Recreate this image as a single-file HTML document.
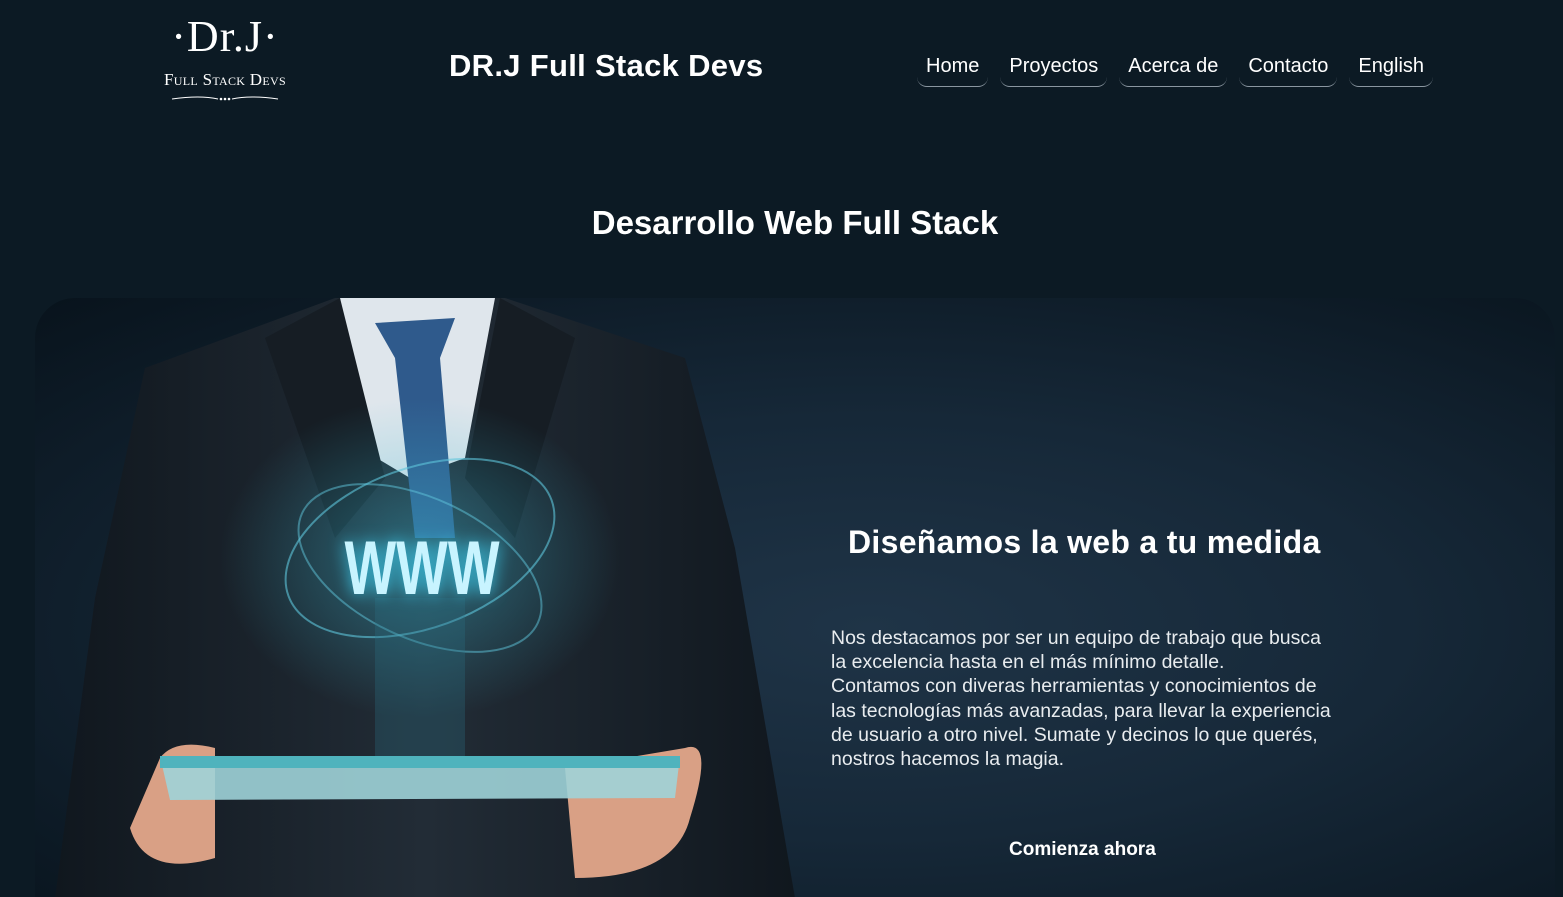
<!DOCTYPE html>
<html><head><meta charset="utf-8"><style>
*{margin:0;padding:0;box-sizing:border-box}
html,body{width:1563px;height:897px;overflow:hidden}
body{background:#0c1a24;font-family:"Liberation Sans","DejaVu Sans",sans-serif;color:#fff;position:relative}
.logo{position:absolute;left:150px;top:12px;width:150px;text-align:center;font-family:"Liberation Serif",serif}
.logo .a{font-size:44px;line-height:50px;letter-spacing:1px}
.logo .b{font-size:17px;margin-top:8px;letter-spacing:.3px;font-variant:small-caps}
.title{position:absolute;left:449px;top:48px;font-size:31px;font-weight:bold;letter-spacing:.3px}
nav{position:absolute;top:52px;left:917px;display:flex;gap:12px}
nav a{color:#fff;text-decoration:none;font-size:20px;padding:0 9px 8px;border-bottom:1px solid #8a96a0;border-radius:0 0 10px 10px;height:35px;line-height:28px}
h1{position:absolute;top:204px;left:0;width:1590px;text-align:center;font-size:33px;font-weight:bold}
.panel{position:absolute;left:35px;top:298px;width:1520px;height:599px;border-radius:40px 40px 0 0;background:radial-gradient(ellipse at 55% 55%,#1f3447 0%,#162838 45%,#08131c 100%);overflow:hidden}
h2{position:absolute;left:848px;top:524px;font-size:32px;font-weight:bold;letter-spacing:.3px}
p{position:absolute;left:831px;top:626px;font-size:19.5px;line-height:24.2px;color:#e8ecef;white-space:nowrap}
.btn{position:absolute;left:1009px;top:839px;font-size:19px;font-weight:bold}
</style></head><body>
<div class="logo"><div class="a">·Dr.J·</div><div class="b">Full Stack Devs</div>
<svg width="110" height="8" style="margin-top:0"><path d="M2 4 Q30 0 48 4 M62 4 Q80 0 108 4" stroke="#fff" fill="none"/><circle cx="51" cy="4" r="1.3" fill="#fff"/><circle cx="55" cy="4" r="1.3" fill="#fff"/><circle cx="59" cy="4" r="1.3" fill="#fff"/></svg></div>
<div class="title">DR.J Full Stack Devs</div>
<nav><a>Home</a><a>Proyectos</a><a>Acerca de</a><a>Contacto</a><a>English</a></nav>
<h1>Desarrollo Web Full Stack</h1>
<div class="panel">
<svg width="800" height="600" style="position:absolute;left:0;top:0">
<defs><radialGradient id="g" cx="50%" cy="50%" r="50%"><stop offset="0" stop-color="#3ab8d0" stop-opacity=".45"/><stop offset="1" stop-color="#3ab8d0" stop-opacity="0"/></radialGradient>
<linearGradient id="s" x1="0" x2="1"><stop offset="0" stop-color="#10171e"/><stop offset=".5" stop-color="#222c36"/><stop offset="1" stop-color="#10171e"/></linearGradient></defs>
<path d="M110 70 L300 0 L470 0 L650 60 L700 250 L760 600 L20 600 L60 300 Z" fill="url(#s)"/>
<path d="M305 0 L460 0 L430 160 L375 180 L325 150 Z" fill="#dfe6ec"/>
<path d="M340 25 L420 20 L405 60 L420 240 L380 240 L360 60 Z" fill="#2f5a8c"/>
<path d="M230 40 L305 0 L350 180 L300 240 Z M540 40 L465 0 L430 180 L480 240 Z" fill="#161d24"/>
<ellipse cx="385" cy="260" rx="200" ry="160" fill="url(#g)"/>
<ellipse cx="385" cy="250" rx="140" ry="80" fill="none" stroke="#5fc6dc" stroke-opacity=".6" stroke-width="2" transform="rotate(-20 385 250)"/>
<ellipse cx="385" cy="270" rx="130" ry="70" fill="none" stroke="#5fc6dc" stroke-opacity=".5" stroke-width="2" transform="rotate(25 385 270)"/>
<rect x="340" y="300" width="90" height="160" fill="#2b6f86" opacity=".3"/>
<text x="387" y="296" text-anchor="middle" font-family="Liberation Sans" font-weight="bold" font-size="76" fill="#c8f4ff" textLength="155" lengthAdjust="spacingAndGlyphs" style="filter:drop-shadow(0 0 8px #3cc8e8)">WWW</text>
<path d="M125 460 Q140 440 180 450 L180 560 Q110 580 95 530 Z M650 450 Q680 440 655 520 Q640 580 540 580 L530 470 Z" fill="#d9a085"/>
<path d="M125 458 L645 458 L640 500 L135 502 Z" fill="#9ed3d8" opacity=".9"/>
<rect x="125" y="458" width="520" height="12" fill="#4fb3bd"/>
</svg>
</div>
<h2>Diseñamos la web a tu medida</h2>
<p>Nos destacamos por ser un equipo de trabajo que busca<br>la excelencia hasta en el más mínimo detalle.<br>Contamos con diveras herramientas y conocimientos de<br>las tecnologías más avanzadas, para llevar la experiencia<br>de usuario a otro nivel. Sumate y decinos lo que querés,<br>nostros hacemos la magia.</p>
<div class="btn">Comienza ahora</div>
</body></html>
